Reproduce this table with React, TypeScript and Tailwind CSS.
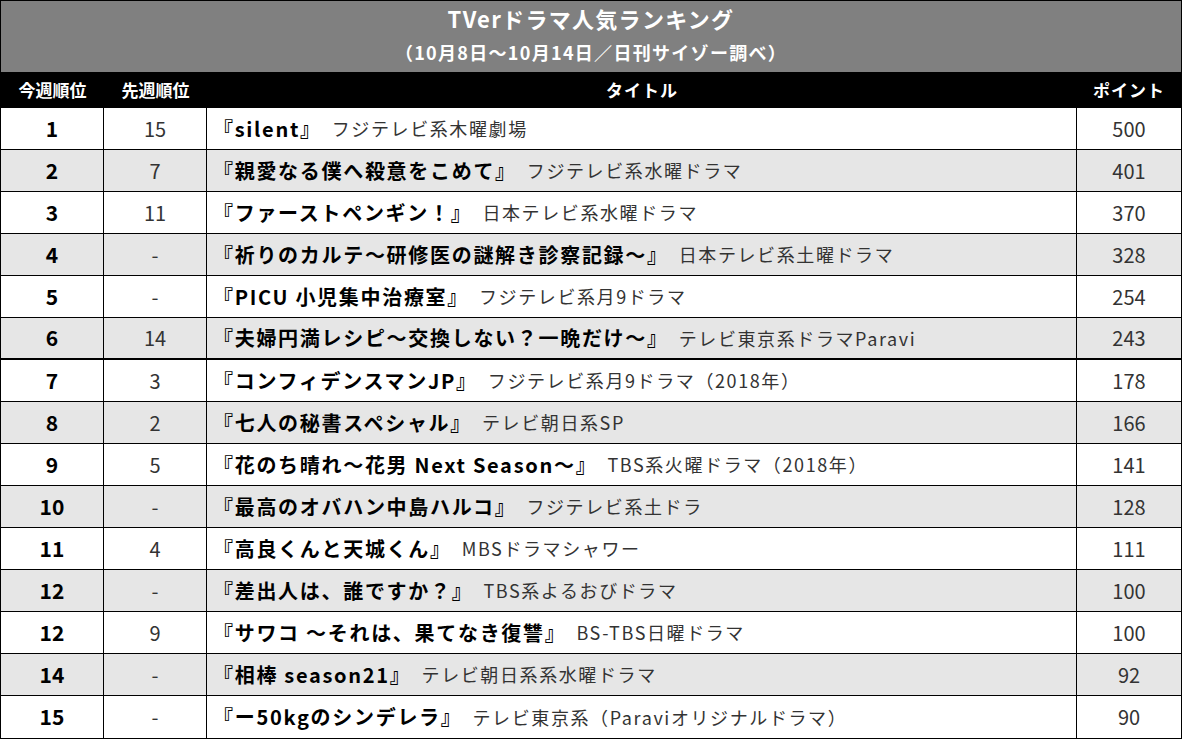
import React from "react";

interface Row {
  rank: string;
  prev: string;
  title: string;
  channel: string;
  points: string;
}

const rows: Row[] = [
  { rank: "1", prev: "15", title: "『silent』", channel: "フジテレビ系木曜劇場", points: "500" },
  { rank: "2", prev: "7", title: "『親愛なる僕へ殺意をこめて』", channel: "フジテレビ系水曜ドラマ", points: "401" },
  { rank: "3", prev: "11", title: "『ファーストペンギン！』", channel: "日本テレビ系水曜ドラマ", points: "370" },
  { rank: "4", prev: "-", title: "『祈りのカルテ～研修医の謎解き診察記録～』", channel: "日本テレビ系土曜ドラマ", points: "328" },
  { rank: "5", prev: "-", title: "『PICU 小児集中治療室』", channel: "フジテレビ系月9ドラマ", points: "254" },
  { rank: "6", prev: "14", title: "『夫婦円満レシピ～交換しない？一晩だけ～』", channel: "テレビ東京系ドラマParavi", points: "243" },
  { rank: "7", prev: "3", title: "『コンフィデンスマンJP』", channel: "フジテレビ系月9ドラマ（2018年）", points: "178" },
  { rank: "8", prev: "2", title: "『七人の秘書スペシャル』", channel: "テレビ朝日系SP", points: "166" },
  { rank: "9", prev: "5", title: "『花のち晴れ～花男 Next Season～』", channel: "TBS系火曜ドラマ（2018年）", points: "141" },
  { rank: "10", prev: "-", title: "『最高のオバハン中島ハルコ』", channel: "フジテレビ系土ドラ", points: "128" },
  { rank: "11", prev: "4", title: "『高良くんと天城くん』", channel: "MBSドラマシャワー", points: "111" },
  { rank: "12", prev: "-", title: "『差出人は、誰ですか？』", channel: "TBS系よるおびドラマ", points: "100" },
  { rank: "12", prev: "9", title: "『サワコ ～それは、果てなき復讐』", channel: "BS-TBS日曜ドラマ", points: "100" },
  { rank: "14", prev: "-", title: "『相棒 season21』", channel: "テレビ朝日系系水曜ドラマ", points: "92" },
  { rank: "15", prev: "-", title: "『ー50kgのシンデレラ』", channel: "テレビ東京系（Paraviオリジナルドラマ）", points: "90" },
];

const App = () => {
  return (
    <div
      className="w-[1182px] h-[739px] bg-white text-black"
      style={{ fontFamily: '"Noto Sans CJK JP", "Noto Sans", sans-serif' }}
    >
      <div className="border border-black">
        <div className="h-[71px] bg-[#808080] text-white font-bold flex flex-col items-center">
          <div className="text-[22px] leading-none mt-[6px] tracking-[1.3px]">TVerドラマ人気ランキング</div>
          <div className="text-[18px] leading-none mt-[14px] tracking-[1.3px]">（10月8日～10月14日／日刊サイゾー調べ）</div>
        </div>
        <div className="h-[36px] bg-black text-white font-bold text-[17px] flex items-center">
          <div className="w-[103px] text-center">今週順位</div>
          <div className="w-[103px] text-center">先週順位</div>
          <div className="flex-1 text-center tracking-[1px]">タイトル</div>
          <div className="w-[104px] text-center tracking-[1px]">ポイント</div>
        </div>
        {rows.map((r, i) => (
          <div
            key={i}
            className={
              "flex h-[42px] border-black " +
              (i === 14 ? "" : i === 5 ? "border-b-2" : "border-b") +
              (i % 2 === 1 ? " bg-[#e6e6e6]" : " bg-white")
            }
          >
            <div className="w-[103px] border-r border-black flex items-center justify-center font-bold text-[21px]">
              {r.rank}
            </div>
            <div className="w-[103px] border-r border-black flex items-center justify-center text-[20px] text-[#333]">
              {r.prev}
            </div>
            <div className="flex-1 border-r border-black flex items-center pl-[6px] whitespace-nowrap">
              <span className="font-bold text-[20px] tracking-[1.7px]">{r.title}</span>
              <span className="ml-[10px] text-[18px] text-[#333] tracking-[1.6px]">{r.channel}</span>
            </div>
            <div className="w-[104px] flex items-center justify-center text-[20px] text-[#333]">
              {r.points}
            </div>
          </div>
        ))}
      </div>
    </div>
  );
};

export default App;
